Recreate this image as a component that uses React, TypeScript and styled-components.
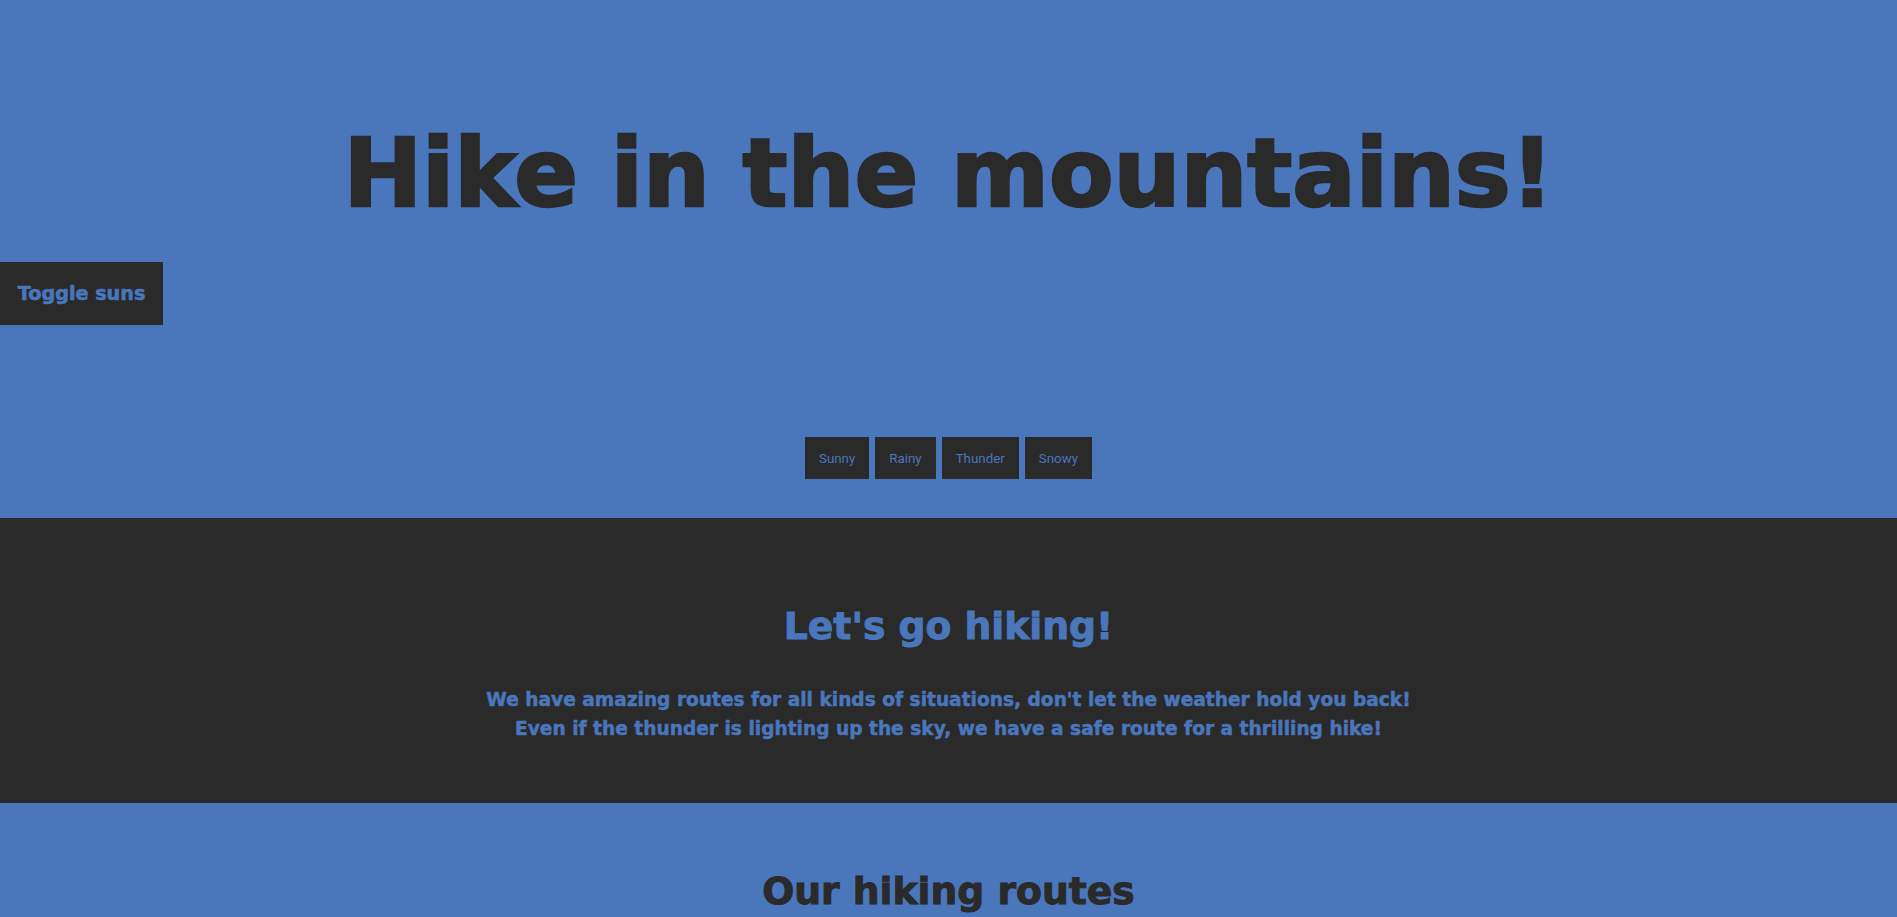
import styled, { createGlobalStyle } from "styled-components";
import React, { useState } from "react";

const blue = "#4a76bc";
const dark = "#2a2a2a";
const heading = `"DejaVu Sans", "Liberation Sans", sans-serif`;

const GlobalStyle = createGlobalStyle`
  * {
    box-sizing: border-box;
  }
  body {
    margin: 0;
    background-color: ${blue};
    font-family: ${heading};
  }
`;

const Header = styled.header`
  background-color: ${blue};
  padding: 127px 0 39px;
  display: flex;
  flex-direction: column;
`;
const Title = styled.h1`
  margin: 0;
  font-size: 94px;
  line-height: 94px;
  font-weight: 700;
  color: ${dark};
  text-align: center;
  -webkit-text-stroke: 2.5px ${dark};
`;
const ToggleBtn = styled.button`
  align-self: flex-start;
  margin-top: 41px;
  height: 63px;
  width: 163px;
  padding: 0;
  border: none;
  outline: none;
  background-color: ${dark};
  color: ${blue};
  font-family: ${heading};
  font-weight: 700;
  font-size: 19.2px;
  -webkit-text-stroke: 0.6px ${blue};
  cursor: pointer;
`;
const Suns = styled.div`
  height: 112px;
`;
const WeatherRow = styled.div`
  display: flex;
  justify-content: center;
  gap: 6px;
`;
const WeatherBtn = styled.button<{ $active?: boolean }>`
  height: 42px;
  padding: 0 14px;
  border: none;
  outline: none;
  background-color: ${dark};
  color: ${blue};
  font-family: Roboto, "Liberation Sans", sans-serif;
  font-size: 13.333px;
  cursor: pointer;
  opacity: ${(p) => (p.$active ? 0.9 : 1)};
`;

const Intro = styled.section`
  background-color: ${dark};
  padding: 86px 20px 0;
  text-align: center;
  height: 285px;
`;
const SectionTitle = styled.h2<{ $color: string }>`
  margin: 0;
  font-size: 37.7px;
  line-height: 44px;
  font-weight: 700;
  color: ${(p) => p.$color};
  -webkit-text-stroke: 1px ${(p) => p.$color};
`;
const IntroText = styled.p`
  margin: 38px 0 0;
  font-size: 18.6px;
  line-height: 28.7px;
  font-weight: 700;
  color: ${blue};
  -webkit-text-stroke: 0.5px ${blue};
`;

const Routes = styled.section`
  background-color: ${blue};
  padding: 66px 20px 80px;
  text-align: center;
`;

const weathers = ["Sunny", "Rainy", "Thunder", "Snowy"];

function App() {
  const [suns, setSuns] = useState(false);
  const [weather, setWeather] = useState<string | null>(null);
  return (
    <>
      <GlobalStyle />
      <Header>
        <Title>Hike in the mountains!</Title>
        <ToggleBtn onClick={() => setSuns((prev) => !prev)}>Toggle suns</ToggleBtn>
        <Suns data-visible={suns} />
        <WeatherRow>
          {weathers.map((w) => (
            <WeatherBtn key={w} $active={weather === w} onClick={() => setWeather(w)}>
              {w}
            </WeatherBtn>
          ))}
        </WeatherRow>
      </Header>
      <Intro>
        <SectionTitle $color={blue}>Let's go hiking!</SectionTitle>
        <IntroText>
          We have amazing routes for all kinds of situations, don't let the weather hold you back!
          <br />
          Even if the thunder is lighting up the sky, we have a safe route for a thrilling hike!
        </IntroText>
      </Intro>
      <Routes>
        <SectionTitle $color={dark}>Our hiking routes</SectionTitle>
      </Routes>
    </>
  );
}

export default App;
